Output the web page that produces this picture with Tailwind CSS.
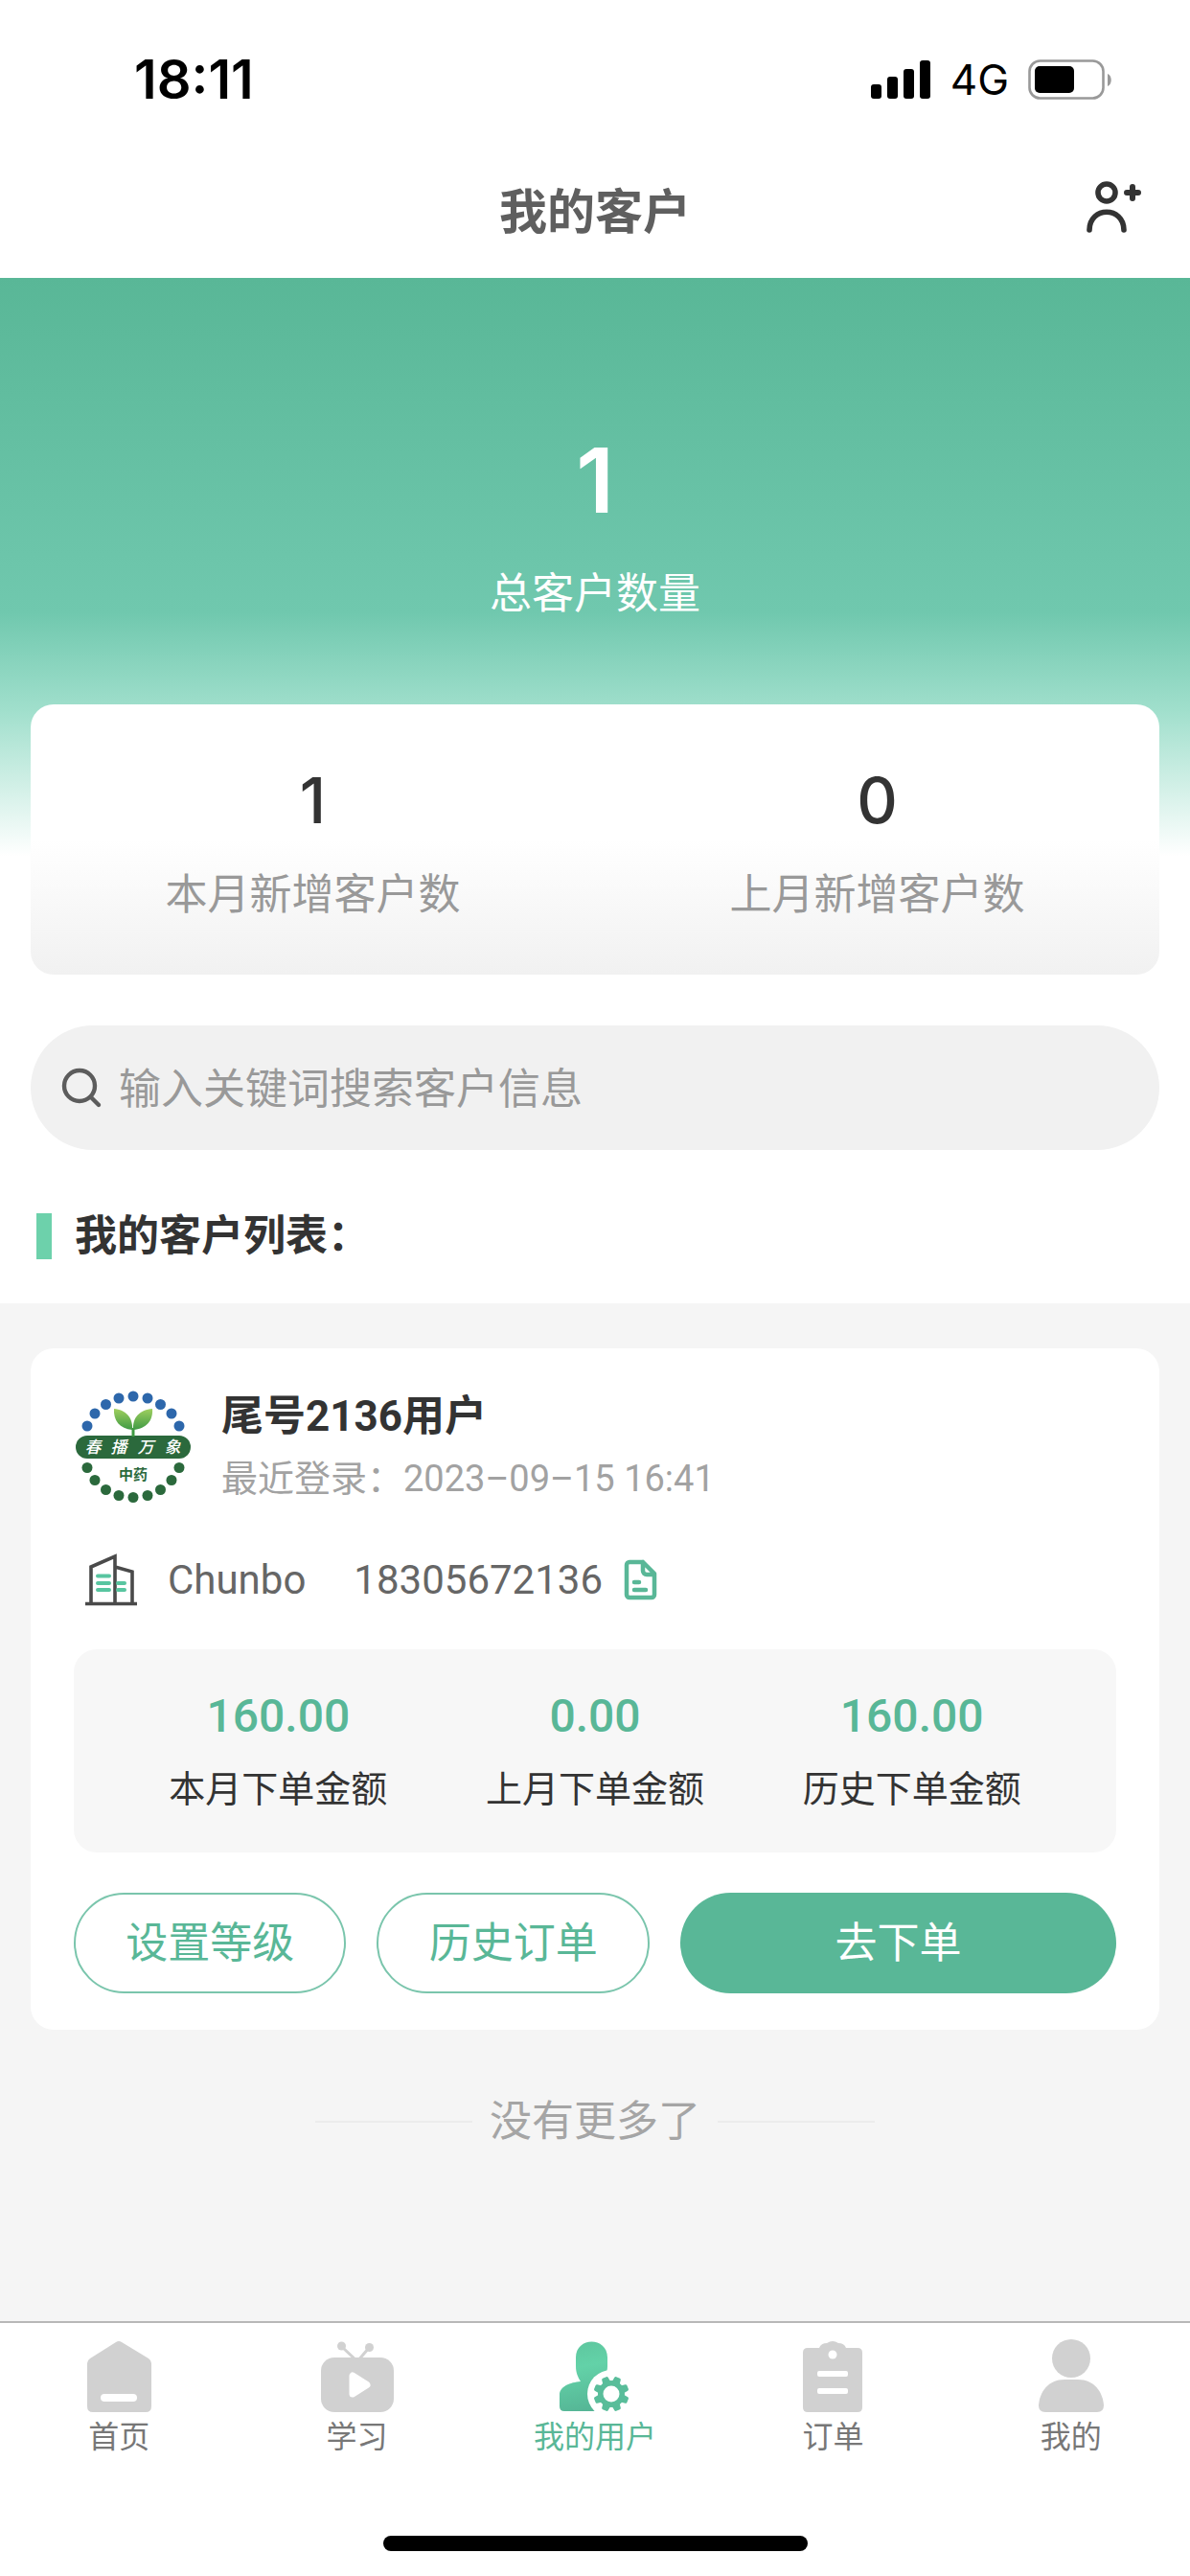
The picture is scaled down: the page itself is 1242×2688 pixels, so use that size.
<!DOCTYPE html>
<html lang="zh-CN">
<head>
  <meta charset="UTF-8" />
  <meta name="viewport" content="width=device-width, initial-scale=1.0"/>
  <title>我的客户</title>
  <script src="https://cdn.jsdelivr.net/npm/@tailwindcss/browser@4"></script>
</head>
<body class="bg-white text-[#333333] font-['Roboto','Noto_Sans_CJK_SC',sans-serif]">
<div class="flex flex-col min-h-screen">

  <!-- status bar -->
  <div class="flex items-center justify-between h-[166px] pl-[140px] pr-[81px] text-black font-['Inter',sans-serif]">
    <span class="text-[56px] leading-[60px] font-semibold">18:11</span>
    <div class="flex items-center gap-5">
      <svg class="w-[64px] h-[40px]" viewBox="0 0 64 40">
        <rect x="1" y="25" width="11" height="15" rx="3"/>
        <rect x="18" y="17" width="11" height="23" rx="3"/>
        <rect x="35" y="9" width="11" height="31" rx="3"/>
        <rect x="52" y="0" width="11" height="40" rx="3"/>
      </svg>
      <span class="text-[44px] leading-[60px]">4G</span>
      <svg class="w-[88px] h-[42px]" viewBox="0 0 88 42">
        <rect x="1.5" y="1.5" width="77" height="39" rx="11" fill="none" stroke="#999" stroke-width="2.6"/>
        <rect x="7" y="7" width="41" height="28" rx="5"/>
        <path d="M83 15c5 2 5 11 0 13z" fill="#999"/>
      </svg>
    </div>
  </div>

  <!-- title bar -->
  <header class="relative flex items-center justify-center h-[112px] mb-3">
    <h1 class="text-[50px] leading-[60px] font-bold text-[#5f5f5f]">我的客户</h1>
    <button type="button" aria-label="添加客户" class="absolute right-[46px] top-[18px]">
      <svg class="w-[64px] h-[60px]" viewBox="0 0 64 60" fill="none" stroke="#333" stroke-linecap="round">
        <circle cx="23" cy="17" r="9" stroke-width="5.6"/>
        <path d="M5 56C5 31 41 31 41 56" stroke-width="5.6"/>
        <path d="M44 17H56M50 11V23" stroke-width="6"/>
      </svg>
    </button>
  </header>

  <!-- totals -->
  <section class="px-8 bg-[linear-gradient(to_bottom,#59b797_0%,#70c8ae_48%,#a0dfcc_62%,#ffffff_83%)]">
    <div class="flex flex-col items-center pt-[157px] pb-[84px] text-white">
      <div class="text-[94px] leading-[108px] font-semibold font-['Inter',sans-serif]">1</div>
      <div class="mt-[34px] text-[44px] leading-[62px]">总客户数量</div>
    </div>
    <div class="grid grid-cols-2 text-center rounded-3xl pt-[60px] pb-[52px] bg-linear-to-b from-white from-50% to-[#f1f1f1]">
      <div>
        <div class="text-[66px] leading-[80px] font-medium font-['Inter',sans-serif]">1</div>
        <div class="mt-7 text-[44px] leading-[62px] text-[#999999]">本月新增客户数</div>
      </div>
      <div>
        <div class="text-[66px] leading-[80px] font-medium font-['Inter',sans-serif]">0</div>
        <div class="mt-7 text-[44px] leading-[62px] text-[#999999]">上月新增客户数</div>
      </div>
    </div>
  </section>

  <!-- search -->
  <label class="flex items-center gap-4 h-[130px] mx-8 mt-[53px] px-8 rounded-full bg-[#f1f1f1]">
    <svg class="w-[44px] h-[44px] shrink-0" viewBox="0 0 44 44" fill="none" stroke="#5c5c5c" stroke-width="4.400" stroke-linecap="round">
      <circle cx="19" cy="20" r="16"/>
      <path d="M31 32L39 40"/>
    </svg>
    <input type="search" aria-label="搜索客户" placeholder="输入关键词搜索客户信息" class="flex-1 min-w-0 pt-1 bg-transparent outline-none text-[44px] leading-[62px] placeholder:text-[#999999]">
  </label>

  <h2 class="flex items-center gap-6 h-[160px] px-[38px] pt-5 text-[44px] leading-[62px] font-bold">
    <span class="w-4 h-12 bg-[#6dd1ab]"></span>我的客户列表：
  </h2>

  <!-- customer list -->
  <main class="flex-1 px-8 pt-[47px] pb-16 bg-[#f5f5f5]">
    <article class="rounded-3xl bg-white px-[45px] pt-10 pb-[38px]">
      <div class="flex items-center gap-[30px]">
        <svg class="w-[124px] h-[124px] shrink-0" viewBox="0 0 124 124">
          <defs>
            <linearGradient id="leaf" x1="0" y1="0" x2="0" y2="1">
              <stop offset="0" stop-color="#9fcf5f"/>
              <stop offset="1" stop-color="#3f9a44"/>
            </linearGradient>
          </defs>
          <g fill="#2d67ab">
            <circle cx="14" cy="40" r="5.500"/><circle cx="22" cy="27" r="5.500"/><circle cx="33.500" cy="17.500" r="5.500"/>
            <circle cx="47" cy="11" r="5.500"/><circle cx="62" cy="9" r="5.500"/><circle cx="77" cy="11" r="5.500"/>
            <circle cx="90.500" cy="17.500" r="5.500"/><circle cx="102" cy="27" r="5.500"/><circle cx="110" cy="40" r="5.500"/>
          </g>
          <g fill="#2b693c">
            <circle cx="14" cy="83.500" r="5.500"/><circle cx="22" cy="96.500" r="5.500"/><circle cx="33.500" cy="106.500" r="5.500"/>
            <circle cx="47" cy="112.500" r="5.500"/><circle cx="62" cy="114.500" r="5.500"/><circle cx="77" cy="112.500" r="5.500"/>
            <circle cx="90.500" cy="106.500" r="5.500"/><circle cx="102" cy="96.500" r="5.500"/><circle cx="110" cy="83.500" r="5.500"/>
            <rect x="2" y="50" width="120" height="24" rx="12"/>
          </g>
          <path d="M62 51V42" stroke="#3f9a44" stroke-width="3"/>
          <path d="M61 44C48 43 41 34 42 22C54 23 62 31 61 44Z" fill="url(#leaf)"/>
          <path d="M62 44C61 31 69 23 82 22C83 35 75 43 62 44Z" fill="url(#leaf)"/>
          <g font-family="Noto Sans CJK SC" font-weight="500" font-style="italic" text-anchor="middle" font-size="17" fill="#fff">
            <text x="20" y="68">春</text><text x="47" y="68">播</text><text x="75" y="68">万</text><text x="103" y="68">象</text>
          </g>
          <text x="62" y="96" font-family="Noto Sans CJK SC" font-weight="700" text-anchor="middle" font-size="15" fill="#2b693c">中药</text>
        </svg>
        <div>
          <h3 class="text-[44px] leading-[62px] font-bold">尾号2136用户</h3>
          <p class="mt-1 text-[38px] leading-[60px] text-[#a2a2a2]">最近登录：2023–09–15 16:41</p>
        </div>
      </div>

      <div class="flex items-center mt-12 h-[56px] text-[42px] leading-[56px] text-[#666666]">
        <svg class="w-[60px] h-[56px] ml-2.5" viewBox="0 0 60 56" fill="none">
          <path d="M8 52V14L33 3V52M33 14L51 19V52M2 52.500H56" stroke="#4a4a4a" stroke-width="3.600"/>
          <path d="M15 23.500H27M15 31H27M15 38H27M36 31H43M36 38H43" stroke="#58c5a0" stroke-width="4" stroke-linecap="round"/>
        </svg>
        <span class="ml-7">Chunbo</span>
        <span class="ml-[50px]">18305672136</span>
        <button type="button" aria-label="备注" class="ml-5">
          <svg class="w-[40px] h-[44px]" viewBox="0 0 40 44" fill="none" stroke="#59b797" stroke-width="4.500" stroke-linecap="round" stroke-linejoin="round">
            <path d="M22 3H8a3 3 0 0 0-3 3V37a3 3 0 0 0 3 3H31a3 3 0 0 0 3-3V15L22 3V12a4 4 0 0 0 4 4H34"/>
            <path d="M13 24H18M13 32H25"/>
          </svg>
        </button>
      </div>

      <dl class="grid grid-cols-3 mt-11 px-12 py-10 rounded-3xl bg-[#f7f7f7] text-center">
        <div class="flex flex-col-reverse gap-5">
          <dt class="text-[38px] leading-[52px]">本月下单金额</dt>
          <dd class="text-[48px] leading-[60px] font-medium text-[#59b797]">160.00</dd>
        </div>
        <div class="flex flex-col-reverse gap-5">
          <dt class="text-[38px] leading-[52px]">上月下单金额</dt>
          <dd class="text-[48px] leading-[60px] font-medium text-[#59b797]">0.00</dd>
        </div>
        <div class="flex flex-col-reverse gap-5">
          <dt class="text-[38px] leading-[52px]">历史下单金额</dt>
          <dd class="text-[48px] leading-[60px] font-medium text-[#59b797]">160.00</dd>
        </div>
      </dl>

      <div class="grid grid-cols-[5fr_5fr_8fr] gap-8 mt-[42px] text-[44px] leading-[62px]">
        <button type="button" class="h-[105px] rounded-full border-2 border-[#59b797]/80 text-[#59b797]">设置等级</button>
        <button type="button" class="h-[105px] rounded-full border-2 border-[#59b797]/80 text-[#59b797]">历史订单</button>
        <button type="button" class="h-[105px] rounded-full bg-[#59b797] text-white">去下单</button>
      </div>
    </article>

    <div class="flex items-center justify-center gap-[18px] mt-16 text-[44px] leading-[64px] text-[#a5a5a5]">
      <span class="w-[164px] h-0.5 bg-[#ececec]"></span>
      <p>没有更多了</p>
      <span class="w-[164px] h-0.5 bg-[#ececec]"></span>
    </div>
  </main>

  <!-- tab bar -->
  <footer class="border-t-2 border-[#b8b8b8] pt-4 pb-[26px] bg-white">
    <nav class="grid grid-cols-5 text-[32px] leading-[42px] text-[#777777]">
      <a href="#" class="flex flex-col items-center gap-0.5">
        <svg class="w-[80px] h-[80px]" viewBox="0 0 80 80" fill="#d1d1d1">
          <path d="M37 4q3-2 6 0L71 21q3 2 3 5V71q0 6-6 6H13q-6 0-6-6V26q0-3 3-5Z"/>
          <rect x="21" y="58" width="38" height="8" rx="4" fill="#fff"/>
        </svg>
        首页
      </a>
      <a href="#" class="flex flex-col items-center gap-0.5">
        <svg class="w-[80px] h-[80px]" viewBox="0 0 80 80" fill="#d1d1d1">
          <path d="M24 9L40 24L52 10" fill="none" stroke="#d1d1d1" stroke-width="3"/>
          <circle cx="23.500" cy="8" r="4.500"/>
          <circle cx="52.500" cy="9.500" r="4.500"/>
          <rect x="2" y="20" width="76" height="57" rx="14"/>
          <path d="M35 39V58L50 48.500Z" fill="#fff" stroke="#fff" stroke-width="7" stroke-linejoin="round"/>
        </svg>
        学习
      </a>
      <a href="#" aria-current="page" class="flex flex-col items-center gap-0.5 text-[#59b797]">
        <svg class="w-[80px] h-[80px]" viewBox="0 0 80 80">
          <defs>
            <linearGradient id="user" gradientUnits="userSpaceOnUse" x1="22" y1="4" x2="36" y2="76">
              <stop offset="0" stop-color="#5ec79f"/>
              <stop offset="0.350" stop-color="#63d2a8"/>
              <stop offset="1" stop-color="#55b595"/>
            </linearGradient>
          </defs>
          <path d="M20 20C20-2 53-2 53 20V29C53 36 50 41 47 44V76H8q-5 0-5-5V59C3 50 14 46 25 45C22 40 20 36 20 29Z" fill="url(#user)"/>
          <circle cx="57" cy="58" r="25" fill="#fff"/>
          <g fill="#59bd9a" stroke="#59bd9a" stroke-width="3" stroke-linejoin="round" transform="rotate(22.500 57 58)">
            <path d="M54 48L55 41H59L60 48ZM54 68L55 75H59L60 68ZM47 55L40 56V60L47 61ZM67 55L74 56V60L67 61Z"/>
            <path d="M54 48L55 41H59L60 48ZM54 68L55 75H59L60 68ZM47 55L40 56V60L47 61ZM67 55L74 56V60L67 61Z" transform="rotate(45 57 58)"/>
          </g>
          <circle cx="57" cy="58" r="14" fill="#59bd9a"/>
          <circle cx="57" cy="58" r="8.500" fill="#fff"/>
        </svg>
        我的用户
      </a>
      <a href="#" class="flex flex-col items-center gap-0.5">
        <svg class="w-[80px] h-[80px]" viewBox="0 0 80 80" fill="#d1d1d1">
          <path d="M14 10H26Q28 5 34 5Q40 1 46 5Q52 5 54 10H66q5 0 5 5V72q0 5-5 5H14q-5 0-5-5V15q0-5 5-5Z"/>
          <g fill="#fff">
            <circle cx="40" cy="17" r="4.500"/>
            <rect x="24" y="34" width="32" height="6" rx="2"/>
            <rect x="24" y="52" width="32" height="6" rx="2"/>
          </g>
        </svg>
        订单
      </a>
      <a href="#" class="flex flex-col items-center gap-0.5">
        <svg class="w-[80px] h-[80px]" viewBox="0 0 80 80" fill="#d1d1d1">
          <circle cx="40" cy="21" r="20"/>
          <path d="M33 43H47C64 43 73 56 74 70q0 7-7 7H13q-7 0-7-7C7 56 16 43 33 43Z"/>
        </svg>
        我的
      </a>
    </nav>
    <div class="w-[443px] h-4 mx-auto mt-[82px] rounded-full bg-black"></div>
  </footer>
</div>
</body>
</html>
